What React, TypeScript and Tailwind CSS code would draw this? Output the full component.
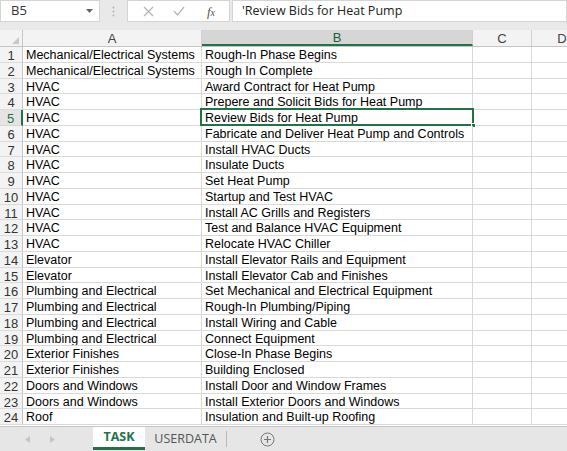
import React from "react";

const rows: [string, string][] = [
  ["Mechanical/Electrical Systems", "Rough-In Phase Begins"],
  ["Mechanical/Electrical Systems", "Rough In Complete"],
  ["HVAC", "Award Contract for Heat Pump"],
  ["HVAC", "Prepere and Solicit Bids for Heat Pump"],
  ["HVAC", "Review Bids for Heat Pump"],
  ["HVAC", "Fabricate and Deliver Heat Pump and Controls"],
  ["HVAC", "Install HVAC Ducts"],
  ["HVAC", "Insulate Ducts"],
  ["HVAC", "Set Heat Pump"],
  ["HVAC", "Startup and Test HVAC"],
  ["HVAC", "Install AC Grills and Registers"],
  ["HVAC", "Test and Balance HVAC Equipment"],
  ["HVAC", "Relocate HVAC Chiller"],
  ["Elevator", "Install Elevator Rails and Equipment"],
  ["Elevator", "Install Elevator Cab and Finishes"],
  ["Plumbing and Electrical", "Set Mechanical and Electrical Equipment"],
  ["Plumbing and Electrical", "Rough-In Plumbing/Piping"],
  ["Plumbing and Electrical", "Install Wiring and Cable"],
  ["Plumbing and Electrical", "Connect Equipment"],
  ["Exterior Finishes", "Close-In Phase Begins"],
  ["Exterior Finishes", "Building Enclosed"],
  ["Doors and Windows", "Install Door and Window Frames"],
  ["Doors and Windows", "Install Exterior Doors and Windows"],
  ["Roof", "Insulation and Built-up Roofing"],
];

export default function App() {
  return (
    <div className="w-[567px] h-[451px] overflow-hidden flex flex-col bg-[#e9e9e9] font-['Liberation_Sans',Arial,sans-serif] text-black">
      {/* Formula bar */}
      <div className="h-[23px] flex shrink-0 bg-[#e9e9e9]">
        <div className="w-[100px] h-[22px] bg-white border border-[#d4d4d4] flex items-center justify-between pl-[10px] pr-[6px]">
          <span className="text-[13px] text-[#333] font-['Open_Sans','Noto_Sans',sans-serif]">B5</span>
          <svg width="7" height="4" viewBox="0 0 7 4"><path d="M0 0h7L3.5 4z" fill="#666" /></svg>
        </div>
        <div className="w-[27px] flex items-center justify-center">
          <svg width="3" height="11" viewBox="0 0 3 11">
            <circle cx="1.5" cy="1.5" r="0.9" fill="#b0b0b0" />
            <circle cx="1.5" cy="5.5" r="0.9" fill="#b0b0b0" />
            <circle cx="1.5" cy="9.5" r="0.9" fill="#b0b0b0" />
          </svg>
        </div>
        <div className="w-[103px] h-[22px] bg-white border border-[#d4d4d4] flex items-center">
          <div className="w-[36px] flex justify-center pl-[4px]">
            <svg width="11" height="11" viewBox="0 0 11 11"><path d="M1 1l9 9M10 1l-9 9" stroke="#b4b4b4" strokeWidth="1.2" /></svg>
          </div>
          <div className="w-[30px] flex justify-center">
            <svg width="12" height="10" viewBox="0 0 12 10"><path d="M1 5l3.5 4L11 1" stroke="#b4b4b4" strokeWidth="1.2" fill="none" /></svg>
          </div>
          <div className="w-[34px] flex justify-center">
            <span className="italic text-[13px] text-[#555] font-['Liberation_Serif',serif] leading-none">f<span className="text-[10px]">x</span></span>
          </div>
        </div>
        <div className="flex-1 ml-[2px] h-[22px] bg-white border border-[#d4d4d4] flex items-center pl-[9px]">
          <span className="text-[12.5px] text-[#222] font-['Open_Sans','Noto_Sans',sans-serif]">'Review Bids for Heat Pump</span>
        </div>
      </div>
      <div className="h-[7px] shrink-0" />

      {/* Grid */}
      <div className="flex-1 bg-white flex flex-col overflow-hidden">
        {/* Column header */}
        <div className="h-[17px] flex shrink-0 bg-[#f3f3f3] border-b border-[#c6c6c6] text-[13px] text-[#444]">
          <div className="w-[23px] shrink-0 border-r border-[#c6c6c6] flex items-end justify-end pr-[3px] pb-[2px]">
            <svg width="7" height="7" viewBox="0 0 7 7"><path d="M7 0v7H0z" fill="#c8c8c8" /></svg>
          </div>
          <div className="w-[179px] shrink-0 border-r border-[#d0d0d0] flex items-center justify-center leading-none">A</div>
          <div className="w-[271px] shrink-0 border-r border-[#d0d0d0] bg-[#d6d6d6] border-b-2 border-b-[#217346] flex items-center justify-center leading-none text-[#1e5c3a]">B</div>
          <div className="w-[59px] shrink-0 border-r border-[#d0d0d0] flex items-center justify-center leading-none">C</div>
          <div className="w-[60px] shrink-0 flex items-center justify-center leading-none">D</div>
        </div>
        {rows.map(([a, b], i) => {
          const sel = i === 4;
          return (
            <div key={i} className="h-[15.75px] flex shrink-0 text-[12.5px] leading-[15px]">
              <div
                className={
                  sel
                    ? "w-[23px] shrink-0 bg-[#e4e4e4] border-r-2 border-r-[#217346] border-b border-[#d6d6d6] text-center text-[#217346] text-[13px] pt-[1px]"
                    : "w-[23px] shrink-0 bg-[#f3f3f3] border-r border-[#c6c6c6] border-b border-b-[#dcdcdc] text-center text-[#333] text-[13px] pt-[1px]"
                }
              >
                {i + 1}
              </div>
              <div className="w-[179px] shrink-0 border-r border-b border-[#d9d9d9] pl-[3px] pt-[1px] whitespace-nowrap overflow-hidden">{a}</div>
              <div className="w-[271px] shrink-0 border-r border-b border-[#d9d9d9] pl-[3px] pt-[1px] whitespace-nowrap relative">
                {b}
                {sel && (
                  <>
                    <div className="absolute left-[-2px] top-[-2px] right-[-2px] bottom-[-1px] border-2 border-[#217346]" />
                    <div className="absolute right-[-4px] bottom-[-3px] w-[5px] h-[5px] bg-[#217346] border border-white" />
                  </>
                )}
              </div>
              <div className="w-[59px] shrink-0 border-r border-b border-[#d9d9d9]" />
              <div className="w-[60px] shrink-0 border-b border-[#d9d9d9]" />
            </div>
          );
        })}
      </div>

      {/* Sheet tabs */}
      <div className="h-[25px] shrink-0 bg-[#e6e6e6] border-t border-[#c6c6c6] flex items-stretch">
        <div className="w-[93px] flex items-center pl-[25px] gap-[20px]">
          <svg width="5" height="7" viewBox="0 0 5 7"><path d="M5 0v7L0 3.5z" fill="#c4c4c4" /></svg>
          <svg width="5" height="7" viewBox="0 0 5 7"><path d="M0 0v7l5-3.5z" fill="#c4c4c4" /></svg>
        </div>
        <div className="w-[52px] h-[23px] bg-white border-b-[3px] border-[#217346] flex items-center justify-center">
          <span className="text-[12.5px] font-bold text-[#217346] font-['Open_Sans','Noto_Sans',sans-serif]">TASK</span>
        </div>
        <div className="w-[82px] flex items-center justify-center border-r border-[#b8b8b8] my-[4px]">
          <span className="text-[12.5px] text-[#555] font-['Open_Sans','Noto_Sans',sans-serif]">USERDATA</span>
        </div>
        <div className="w-[80px] flex items-center justify-center">
          <svg width="15" height="15" viewBox="0 0 15 15">
            <circle cx="7.5" cy="7.5" r="6.5" fill="none" stroke="#777" strokeWidth="1" />
            <path d="M7.5 4v7M4 7.5h7" stroke="#777" strokeWidth="1.2" />
          </svg>
        </div>
      </div>
    </div>
  );
}
